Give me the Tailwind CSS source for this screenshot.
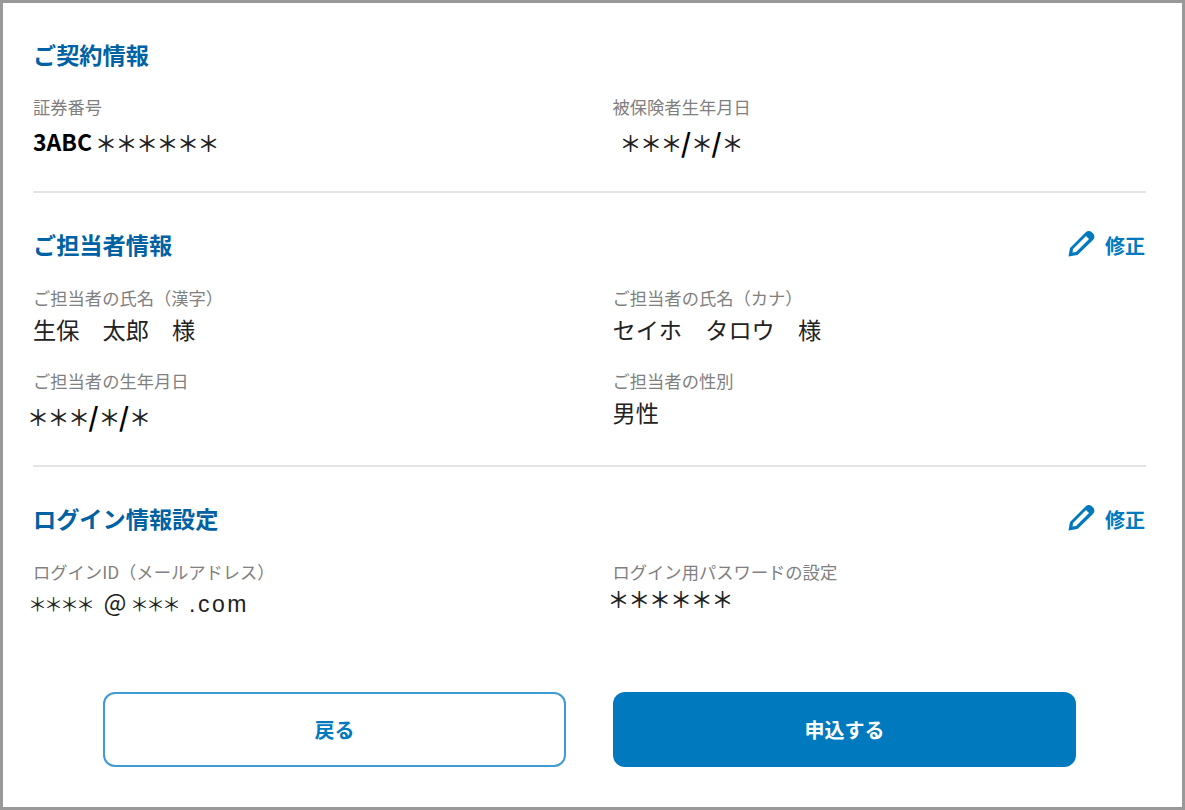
<!DOCTYPE html>
<html lang="ja">
<head>
  <meta charset="UTF-8" />
  <title>ご契約情報</title>
  <script src="https://cdn.jsdelivr.net/npm/@tailwindcss/browser@4"></script>
</head>
<body class="bg-white">
  <div class="w-[1185px] h-[810px] border-[3px] border-[#999999] bg-white px-[30px] font-['Noto_Sans_CJK_JP','Liberation_Sans',sans-serif] overflow-hidden">

    <!-- ご契約情報 -->
    <section class="h-[190px] border-b-2 border-[#e5e5e5] pt-[34px] w-[1113px]">
      <h2 class="text-[23.2px] leading-[34px] font-bold text-[#0061a3]">ご契約情報</h2>
      <div class="grid grid-cols-[579.5px_1fr] mt-[24px]">
        <div>
          <p class="text-[17.3px] leading-[24px] text-[#808080]">証券番号</p>
          <p class="h-[30px] mt-[7px] text-[#222] flex items-center"><span class="text-[23px] leading-[30px] font-bold text-black mr-[3px]">3ABC</span><span class="text-[22px] leading-[30px] tracking-[-1.5px] font-medium">＊＊＊＊＊＊</span></p>
        </div>
        <div>
          <p class="text-[17.3px] leading-[24px] text-[#808080]">被保険者生年月日</p>
          <p class="h-[30px] mt-[7px] text-[#222] pl-[7px] flex items-center text-[22px] tracking-[-1.5px] font-medium">＊＊＊<span class="w-[10px] text-center text-[26px] tracking-normal font-bold text-black">/</span>＊<span class="w-[10px] text-center text-[26px] tracking-normal font-bold text-black">/</span>＊</p>
        </div>
      </div>
    </section>

    <!-- ご担当者情報 -->
    <section class="h-[274px] border-b-2 border-[#e5e5e5] pt-[34px] w-[1113px]">
      <div class="flex justify-between items-center h-[34px]">
        <h2 class="text-[23.2px] leading-[34px] font-bold text-[#0061a3]">ご担当者情報</h2>
        <a class="flex items-center gap-[10px] mr-[1px] text-[20px] font-bold text-[#0079bf]">
          <svg width="28" height="28" viewBox="0 0 28 28" fill="#0079bf" fill-rule="evenodd"><path d="M1.5 26.5L3 18 18.5 2.5Q21.5 0 24.5 2L26.5 4Q28.5 7 26 10L10.5 25ZM5.5 22.5L6 19 19 6 22 9 9 22Z"/></svg>
          <span class="pt-[3px]">修正</span>
        </a>
      </div>
      <div class="grid grid-cols-[579.5px_1fr] mt-[25px]">
        <div>
          <p class="text-[17.3px] leading-[24px] text-[#808080]">ご担当者の氏名（漢字）</p>
          <p class="text-[23.2px] leading-[34px] mt-[2px] text-[#222]">生保　太郎　様</p>
        </div>
        <div>
          <p class="text-[17.3px] leading-[24px] text-[#808080]">ご担当者の氏名（カナ）</p>
          <p class="text-[23.2px] leading-[34px] mt-[2px] text-[#222]">セイホ　タロウ　様</p>
        </div>
        <div class="mt-[23px]">
          <p class="text-[17.3px] leading-[24px] text-[#808080]">ご担当者の生年月日</p>
          <p class="h-[34px] text-[#222] -ml-[6px] mt-[5px] flex items-center text-[22px] tracking-[-1.5px] font-medium">＊＊＊<span class="w-[10px] text-center text-[26px] tracking-normal font-bold text-black">/</span>＊<span class="w-[10px] text-center text-[26px] tracking-normal font-bold text-black">/</span>＊</p>
        </div>
        <div class="mt-[23px]">
          <p class="text-[17.3px] leading-[24px] text-[#808080]">ご担当者の性別</p>
          <p class="text-[23.2px] leading-[34px] mt-[2px] text-[#222]">男性</p>
        </div>
      </div>
    </section>

    <!-- ログイン情報設定 -->
    <section class="pt-[34px] w-[1113px]">
      <div class="flex justify-between items-center h-[34px]">
        <h2 class="text-[23.2px] leading-[34px] font-bold text-[#0061a3]">ログイン情報設定</h2>
        <a class="flex items-center gap-[10px] mr-[1px] text-[20px] font-bold text-[#0079bf]">
          <svg width="28" height="28" viewBox="0 0 28 28" fill="#0079bf" fill-rule="evenodd"><path d="M1.5 26.5L3 18 18.5 2.5Q21.5 0 24.5 2L26.5 4Q28.5 7 26 10L10.5 25ZM5.5 22.5L6 19 19 6 22 9 9 22Z"/></svg>
          <span class="pt-[3px]">修正</span>
        </a>
      </div>
      <div class="grid grid-cols-[579.5px_1fr] mt-[25px]">
        <div>
          <p class="text-[17.3px] leading-[24px] text-[#808080]">ログインID（メールアドレス）</p>
          <p class="h-[30px] text-[#222] -ml-[5px] mt-[5px] flex items-center"><span class="text-[19px] tracking-[-3px]">＊＊＊＊</span><span class="text-[24px] ml-[11px]">＠</span><span class="text-[19px] tracking-[-3px] ml-[3px]">＊＊＊</span><span class="text-[23px] ml-[11px] tracking-[2.5px] font-['Liberation_Sans',sans-serif]">.com</span></p>
        </div>
        <div>
          <p class="text-[17.3px] leading-[24px] text-[#808080]">ログイン用パスワードの設定</p>
          <p class="text-[22px] leading-[30px] -mt-[2px] tracking-[-1.2px] font-medium text-[#222] -ml-[5px]">＊＊＊＊＊＊</p>
        </div>
      </div>
      <div class="flex gap-[47px] ml-[70px] mt-[73px]">
        <button class="w-[463px] h-[75px] rounded-[12px] border-2 border-[#3f9bd2] bg-white text-[#0079bf] text-[20px] font-bold">戻る</button>
        <button class="w-[463px] h-[75px] rounded-[12px] bg-[#0079bf] text-white text-[20px] font-bold">申込する</button>
      </div>
    </section>
  </div>
</body>
</html>
